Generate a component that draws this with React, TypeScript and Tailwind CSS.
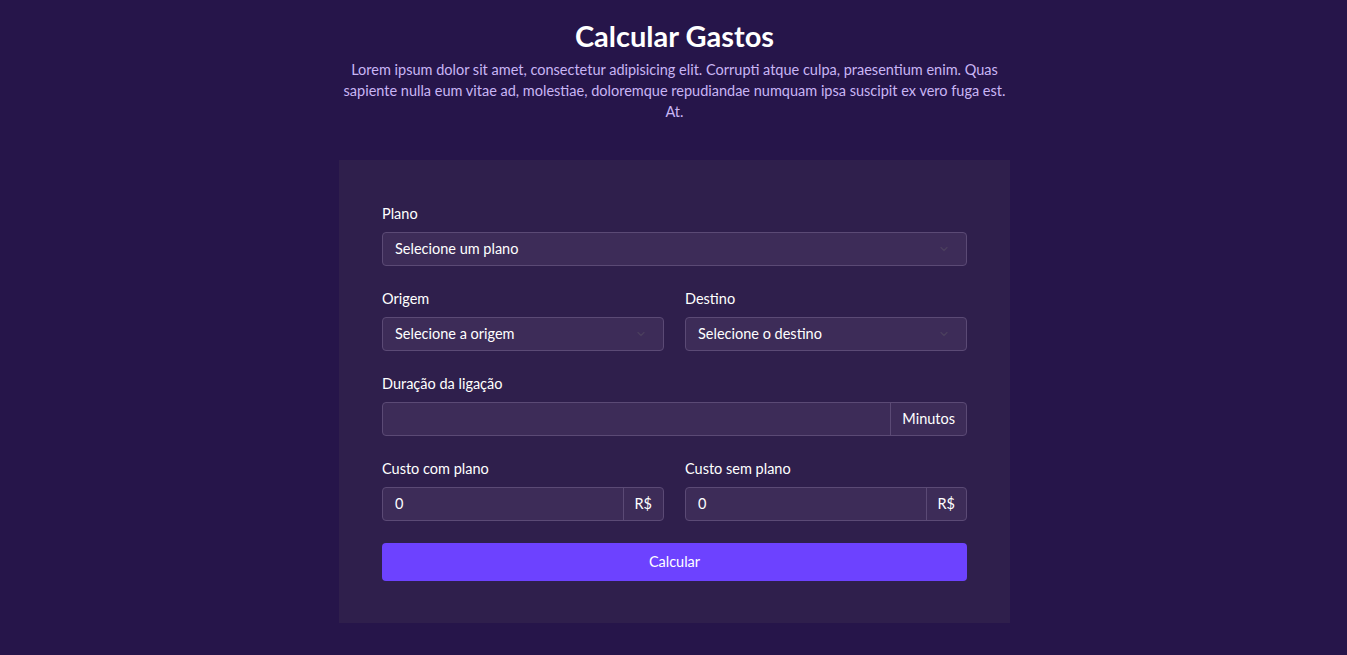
import { ChevronDown } from "lucide-react"

function Label({ children }: { children: React.ReactNode }) {
  return <label className="block text-[14.5px] leading-[21px] text-white mb-[8px]">{children}</label>
}

function Select({ placeholder }: { placeholder: string }) {
  return (
    <div className="relative flex items-center h-[34px] rounded-[4px] border border-[#5b4a75] bg-[#3d2c58] pl-3 pr-8 text-[14.5px] text-white">
      <span>{placeholder}</span>
      <ChevronDown className="absolute right-[16px] top-1/2 -translate-y-1/2 w-[12px] h-[12px] text-[#4b3f5e]" strokeWidth={2.5} />
    </div>
  )
}

function AddonInput({ value, addon }: { value: string; addon: string }) {
  return (
    <div className="flex h-[34px] rounded-[4px] border border-[#5b4a75] bg-[#3d2c58] text-[14.5px] text-white">
      <div className="flex-1 flex items-center pl-3">{value}</div>
      <div className="flex items-center px-[11px] border-l border-[#5b4a75]">{addon}</div>
    </div>
  )
}

export default function App() {
  return (
    <div className="min-h-screen bg-[#26154a] font-['Lato',sans-serif] pt-[18px] pb-8">
      <div className="w-[671px] mx-auto translate-x-[1px]">
        <h1 className="text-center text-white text-[29px] leading-[36px] font-bold">Calcular Gastos</h1>
        <p className="mt-[5px] text-center text-[#c9b5f5] text-[14.5px] leading-[21px]">
          Lorem ipsum dolor sit amet, consectetur adipisicing elit. Corrupti atque culpa, praesentium enim. Quas sapiente nulla eum vitae ad, molestiae, doloremque repudiandae numquam ipsa suscipit ex vero fuga est. At.
        </p>

        <div className="mt-[38px] bg-[#2f1f4c] px-[43px] pt-[43px] pb-[42px] flex flex-col gap-[22px]">
          <div>
            <Label>Plano</Label>
            <Select placeholder="Selecione um plano" />
          </div>
          <div className="grid grid-cols-2 gap-[21px]">
            <div>
              <Label>Origem</Label>
              <Select placeholder="Selecione a origem" />
            </div>
            <div>
              <Label>Destino</Label>
              <Select placeholder="Selecione o destino" />
            </div>
          </div>
          <div>
            <Label>Duração da ligação</Label>
            <AddonInput value="" addon="Minutos" />
          </div>
          <div className="grid grid-cols-2 gap-[21px]">
            <div>
              <Label>Custo com plano</Label>
              <AddonInput value="0" addon="R$" />
            </div>
            <div>
              <Label>Custo sem plano</Label>
              <AddonInput value="0" addon="R$" />
            </div>
          </div>
          <button className="h-[38px] rounded-[4px] bg-[#6d42ff] text-white text-[14.5px]">Calcular</button>
        </div>
      </div>
    </div>
  )
}
